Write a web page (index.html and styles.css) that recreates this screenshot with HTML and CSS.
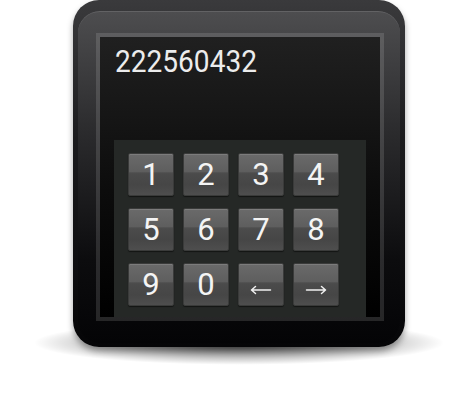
FILE: index.html
```html
<!DOCTYPE html>
<html>
<head>
<meta charset="utf-8">
<link rel="stylesheet" href="styles.css">
</head>
<body>
<div class="stage">
  <div class="watch">
    <div class="face">
      <div class="frame">
        <div class="screen">
          <div class="display"><span class="number">222560432</span></div>
          <div class="keypad">
            <div class="key">1</div>
            <div class="key">2</div>
            <div class="key">3</div>
            <div class="key">4</div>
            <div class="key">5</div>
            <div class="key">6</div>
            <div class="key">7</div>
            <div class="key">8</div>
            <div class="key">9</div>
            <div class="key">0</div>
            <div class="key arrow"><svg width="22" height="10" viewBox="0 0 22 10"><path d="M1.5 5H20.5M1.5 5L5.5 1.5M1.5 5L5.5 8.5" stroke="#f0f0f0" stroke-width="1.5" fill="none" stroke-linecap="round"/></svg></div>
            <div class="key arrow"><svg width="22" height="10" viewBox="0 0 22 10"><path d="M1.5 5H20.5M20.5 5L16.5 1.5M20.5 5L16.5 8.5" stroke="#f0f0f0" stroke-width="1.5" fill="none" stroke-linecap="round"/></svg></div>
          </div>
        </div>
      </div>
    </div>
  </div>
  <div class="ground"></div>
</div>
</body>
</html>
```
FILE: styles.css
```css
html, body {
  margin: 0;
  padding: 0;
  background: #ffffff;
}
.stage {
  width: 474px;
  height: 403px;
  padding-left: 73px;
  box-sizing: border-box;
}
.watch {
  position: relative;
  z-index: 1;
  width: 332px;
  height: 347px;
  box-sizing: border-box;
  border-radius: 26px;
  background: linear-gradient(#3a3a3c 0%, #1c1c1e 40%, #050507 100%);
  padding: 11px 5px 4px 5px;
  box-shadow: 0 4px 6px rgba(0,0,0,0.35);
}
.ground {
  width: 410px;
  height: 44px;
  margin: -24px 0 0 -39px;
  background: radial-gradient(ellipse 50% 50% at 50% 45%, rgba(0,0,0,0.75) 0%, rgba(0,0,0,0.4) 45%, rgba(0,0,0,0) 100%);
}
.face {
  height: 100%;
  box-sizing: border-box;
  border-radius: 22px;
  border-top: 1px solid #626264;
  background: linear-gradient(#4d4d4f 0%, #2c2c2e 35%, #0c0c0e 75%, #040406 100%);
  padding: 21px 16px 21px 18px;
}
.frame {
  width: 288px;
  height: 288px;
  box-sizing: border-box;
  border: 4px solid rgba(255,255,255,0.13);
}
.screen {
  width: 280px;
  height: 280px;
  background: linear-gradient(#202020 0%, #0c0c0c 55%, #000000 100%);
  display: flex;
  flex-direction: column;
}
.display {
  height: 103px;
  box-sizing: border-box;
  padding: 8px 0 0 15px;
}
.number {
  display: inline-block;
  font-family: Roboto, "Liberation Sans", sans-serif;
  font-size: 32px;
  line-height: 32px;
  color: #ececec;
  transform: scaleX(0.877);
  transform-origin: left top;
}
.keypad {
  margin-left: 14px;
  width: 252px;
  flex: 1;
  box-sizing: border-box;
  background: #252826;
  padding: 13px 0 0 14px;
  display: grid;
  grid-template-columns: repeat(4, 46px);
  grid-auto-rows: 43px;
  column-gap: 9px;
  row-gap: 12px;
  align-content: start;
}
.key {
  box-sizing: border-box;
  border-radius: 2px;
  border: 1px solid #3a3b3a;
  background: linear-gradient(#6a6a6a 0%, #5e5e5e 44%, #535353 45%, #4b4b4b 48%, #464646 75%, #4e4e4e 100%);
  box-shadow: inset 0 1px 0 rgba(255,255,255,0.12), 0 1px 1px rgba(0,0,0,0.5);
  display: flex;
  align-items: center;
  justify-content: center;
  font-family: Roboto, "Liberation Sans", sans-serif;
  font-size: 31px;
  line-height: 1;
  color: #f4f4f4;
}
.key.arrow svg {
  margin-top: 11px;
}
```
